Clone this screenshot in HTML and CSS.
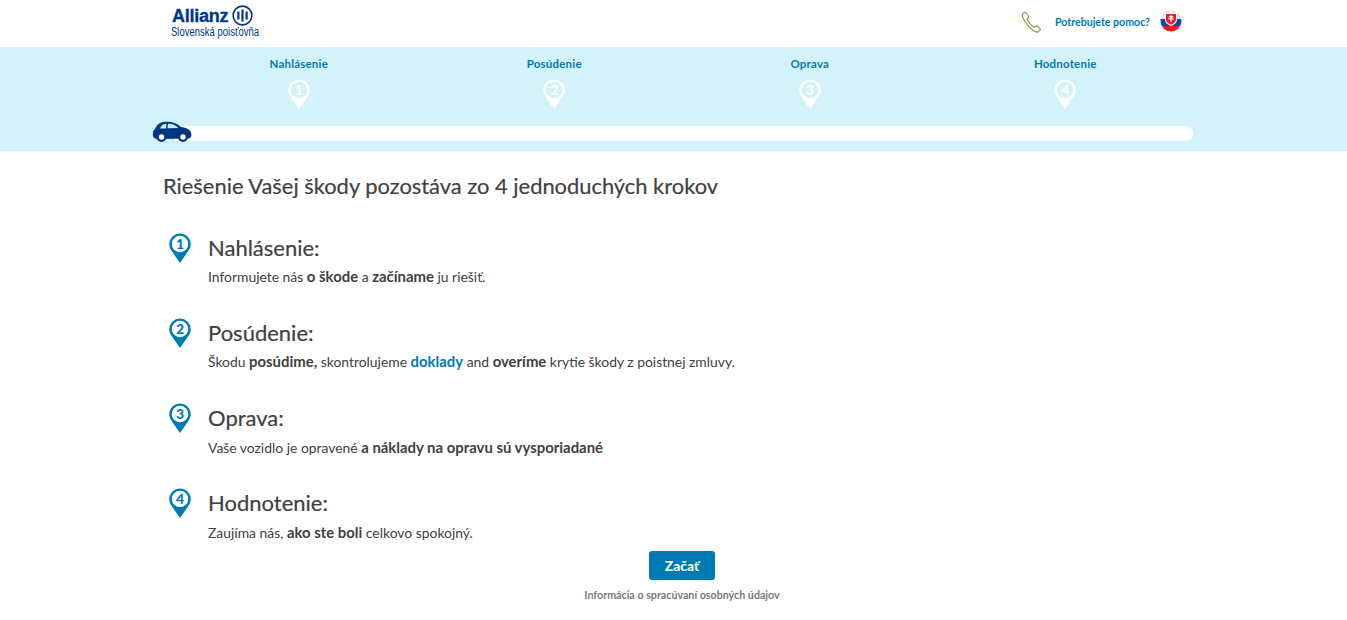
FILE: index.html
```html
<!DOCTYPE html>
<html lang="sk">
<head>
  <meta charset="UTF-8">
  <title>Allianz - Nahlásenie škody</title>
  <link rel="stylesheet" href="styles.css">
</head>
<body>
  <svg class="sprite" width="0" height="0">
    <symbol id="pin" viewBox="0 0 22 30">
      <path fill-rule="evenodd" d="M11 30 L3 18.500 A10.800 10.800 0 1 1 19 18.500 Z M11 2.700 A8.300 8.300 0 1 0 11 19.300 A8.300 8.300 0 1 0 11 2.700 Z"/>
    </symbol>
  </svg>

  <header class="top">
    <div class="logo">
      <div class="logo-main">
        <span class="logo-name">Allianz</span>
        <svg class="logo-mark" width="21" height="21" viewBox="0 0 21 21">
          <circle cx="10.500" cy="10.500" r="9.400" fill="none" stroke="#003781" stroke-width="1.600"/>
          <path fill="#003781" d="M5.300 6.500h2.200v8H5.300zM9.400 4.500h2.200v12H9.400zM13.500 6.500h2.200v8h-2.200z"/>
        </svg>
      </div>
      <div class="logo-sub">Slovenská poisťovňa</div>
    </div>
    <div class="help">
      <svg class="phone" width="20" height="22" viewBox="0 0 20 22" fill="none">
        <path d="M2 2.500 C3 1.300 4.400 1 5 1.600 L7.500 5.200 C7.900 5.900 7.400 6.600 6.600 7.200 C6 7.700 5.900 8.300 6.300 9 C7.800 11.600 10 14.200 12.600 16 C13.200 16.400 13.800 16.300 14.300 15.800 C15 15 15.700 14.600 16.400 15 L19 17.600 C19.500 18.300 19 19.600 17.800 20.500 C16.500 21.400 14.800 21.200 13 20 C8.800 17.200 4.800 12.600 2.200 7.600 C1.200 5.600 1 3.700 2 2.500 Z" stroke="#7f9a3c" stroke-width="1.100"/>
      </svg>
      <span class="help-text">Potrebujete pomoc?</span>
      <svg class="flag" width="22" height="22" viewBox="0 0 22 22">
        <defs><clipPath id="flag-clip"><circle cx="11" cy="11" r="10.500"/></clipPath></defs>
        <g clip-path="url(#flag-clip)">
          <rect width="22" height="9" fill="#e6e6e6"/>
          <rect y="9" width="22" height="7" fill="#0b4ea2"/>
          <rect y="16" width="22" height="6" fill="#ee1c25"/>
        </g>
        <path fill="#fff" d="M5 3h12v6.500c0 3.400-2.800 5-6 6.500-3.200-1.500-6-3.100-6-6.500z"/>
        <path fill="#ee1c25" d="M6 4h10v5.500c0 2.700-2.300 4-5 5.300-2.700-1.300-5-2.600-5-5.300z"/>
        <path fill="#fff" d="M10.400 5h1.200v1.300h1.700v1.100h-1.700v1h2.200v1.100h-2.200v2.200h-1.200V9.500H8.200V8.400h2.200v-1H8.700V6.300h1.700z"/>
      </svg>
    </div>
  </header>

  <section class="progress">
    <ul class="stages">
      <li class="stage">
        <span class="stage-name">Nahlásenie</span>
        <span class="stage-pin"><svg width="22" height="30"><use href="#pin"/></svg><b>1</b></span>
      </li>
      <li class="stage">
        <span class="stage-name">Posúdenie</span>
        <span class="stage-pin"><svg width="22" height="30"><use href="#pin"/></svg><b>2</b></span>
      </li>
      <li class="stage">
        <span class="stage-name">Oprava</span>
        <span class="stage-pin"><svg width="22" height="30"><use href="#pin"/></svg><b>3</b></span>
      </li>
      <li class="stage">
        <span class="stage-name">Hodnotenie</span>
        <span class="stage-pin"><svg width="22" height="30"><use href="#pin"/></svg><b>4</b></span>
      </li>
    </ul>
    <div class="track">
      <svg class="car" width="40" height="22" viewBox="0 0 40 22">
        <path fill="#003781" d="M1 15 C0.500 12 1 9.500 3 8 C5 3.500 8 1 13 0.800 C19 0.300 24 1.500 29 6 C34 6.800 38.500 8.500 39.200 12 C39.800 15 39 17 37 17.500 L6 18 C3 18 1.500 17 1 15 Z"/>
        <path fill="#cfeaf5" d="M8 7.500 C9.500 4.500 11 3 13.500 2.800 L14.500 2.800 L14 7.500 Z M16 2.700 C20 2.500 23.500 3.800 26.500 7 L15.500 7.300 Z"/>
        <circle cx="9.500" cy="16" r="5" fill="#003781"/>
        <circle cx="9.500" cy="16" r="2.700" fill="#fff"/>
        <circle cx="31" cy="16" r="5" fill="#003781"/>
        <circle cx="31" cy="16" r="2.700" fill="#fff"/>
      </svg>
    </div>
  </section>

  <main class="content">
    <h1 class="page-title">Riešenie Vašej škody pozostáva zo 4 jednoduchých krokov</h1>

    <div class="step">
      <span class="step-pin"><svg width="22" height="30"><use href="#pin"/></svg><b>1</b></span>
      <div class="step-body">
        <h2>Nahlásenie:</h2>
        <p>Informujete nás <strong>o škode</strong> a <strong>začíname</strong> ju riešiť.</p>
      </div>
    </div>

    <div class="step">
      <span class="step-pin"><svg width="22" height="30"><use href="#pin"/></svg><b>2</b></span>
      <div class="step-body">
        <h2>Posúdenie:</h2>
        <p>Škodu <strong>posúdime,</strong> skontrolujeme <a href="#">doklady</a> and <strong>overíme</strong> krytie škody z poistnej zmluvy.</p>
      </div>
    </div>

    <div class="step">
      <span class="step-pin"><svg width="22" height="30"><use href="#pin"/></svg><b>3</b></span>
      <div class="step-body">
        <h2>Oprava:</h2>
        <p>Vaše vozidlo je opravené <strong>a náklady na opravu sú vysporiadané</strong></p>
      </div>
    </div>

    <div class="step">
      <span class="step-pin"><svg width="22" height="30"><use href="#pin"/></svg><b>4</b></span>
      <div class="step-body">
        <h2>Hodnotenie:</h2>
        <p>Zaujíma nás, <strong>ako ste boli</strong> celkovo spokojný.</p>
      </div>
    </div>

    <div class="actions">
      <button class="start-btn">Začať</button>
      <a class="privacy" href="#">Informácia o spracúvaní osobných údajov</a>
    </div>
  </main>
</body>
</html>
```

FILE: styles.css
```css
* {
  box-sizing: border-box;
}

body {
  margin: 0;
  font-family: "Lato", "Noto Sans", sans-serif;
  color: #414141;
  background-color: #fff;
}

.sprite {
  display: block;
  height: 0;
}

/* Hlavicka */
.top {
  display: flex;
  justify-content: space-between;
  align-items: flex-start;
  height: 47px;
  padding: 5px 165px 0 171px;
}

.logo-main {
  display: flex;
  align-items: center;
  gap: 4px;
  height: 20px;
}

.logo-name {
  font-family: "Liberation Sans", sans-serif;
  font-size: 18px;
  font-weight: 700;
  line-height: 22px;
  color: #003781;
  letter-spacing: -0.25px;
  margin: 1px 0 0 1px;
  -webkit-text-stroke: 0.3px #003781;
}

.logo-sub {
  font-family: "Liberation Sans", sans-serif;
  font-size: 12.5px;
  line-height: 14px;
  color: #003781;
  transform: scaleX(0.76);
  transform-origin: left;
  white-space: nowrap;
  width: 110px;
}

.help {
  display: flex;
  align-items: center;
  height: 33px;
}

.phone {
  margin-right: 13px;
}

.help-text {
  font-size: 10.6px;
  font-weight: 700;
  line-height: 14px;
  color: #007ab3;
  margin: 0 10px 0 1px;
}

.flag {
  margin-top: -2px;
}

/* Priebeh */
.progress {
  height: 104px;
  background-color: #d4f2f9;
  padding: 0 154px 0 152px;
}

.stages {
  display: grid;
  grid-template-columns: repeat(4, 255.5px);
  list-style: none;
  margin: 0 0 0 19px;
  padding: 10px 0 0;
  height: 79px;
}

.stage {
  display: flex;
  flex-direction: column;
  align-items: center;
}

.stage-name {
  font-size: 11.5px;
  font-weight: 700;
  line-height: 13px;
  letter-spacing: 0.2px;
  color: #007ab3;
  margin-bottom: 9px;
}

.stage-pin,
.step-pin {
  position: relative;
  display: block;
  width: 22px;
  height: 30px;
}

.stage-pin svg {
  fill: #fff;
}

.stage-pin b,
.step-pin b {
  position: absolute;
  top: 3px;
  left: 0;
  width: 22px;
  text-align: center;
  font-size: 14px;
  font-weight: 900;
  line-height: 16px;
}

.stage-pin b {
  color: #fff;
}

.track {
  position: relative;
  height: 15px;
  margin-left: 23px;
  background-color: #fff;
  border-radius: 0 8px 8px 0;
}

.car {
  position: absolute;
  left: -23px;
  top: -5px;
}

/* Obsah */
.content {
  padding: 0 163px;
}

.page-title {
  margin: 0 0 32.6px;
  padding-top: 22px;
  font-size: 21.9px;
  font-weight: 400;
  line-height: 26px;
  -webkit-text-stroke: 0.2px #414141;
}

.step {
  display: flex;
  height: 85.3px;
  padding-left: 6px;
}

.step-pin {
  margin-top: 1px;
}

.step-pin svg {
  fill: #007ab3;
}

.step-pin b {
  color: #007ab3;
}

.step-body {
  margin-left: 17px;
}

.step-body h2 {
  margin: 2px 0 0;
  font-size: 22px;
  font-weight: 400;
  line-height: 28px;
  -webkit-text-stroke: 0.2px #414141;
}

.step-body p {
  margin: 4.4px 0 0;
  font-size: 13.9px;
  line-height: 20px;
}

.step-body strong {
  font-size: 14.9px;
  font-weight: 700;
}

.step-body a {
  color: #007ab3;
  font-size: 14.9px;
  font-weight: 700;
  text-decoration: none;
}

.actions {
  display: flex;
  flex-direction: column;
  align-items: center;
  gap: 7px;
  margin-top: -21.6px;
  padding-left: 17px;
}

.start-btn {
  width: 66px;
  height: 29px;
  border: none;
  border-radius: 3px;
  background-color: #007ab3;
  color: #fff;
  font-family: inherit;
  font-size: 14px;
  font-weight: 700;
}

.privacy {
  font-size: 10.7px;
  font-weight: 700;
  line-height: 15px;
  color: #7a7a7a;
  text-decoration: none;
}
```
